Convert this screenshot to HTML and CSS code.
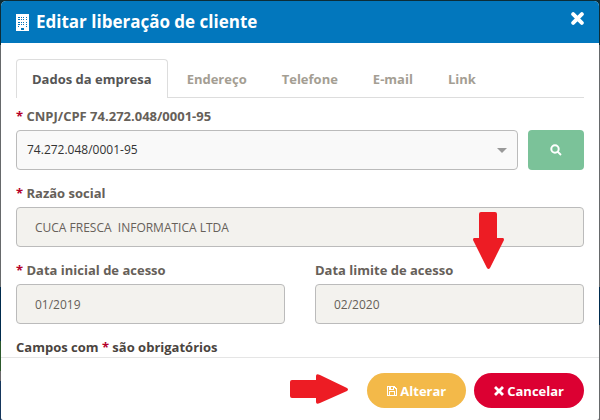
FILE: index.html
```html
<!DOCTYPE html>
<html lang="pt-BR">
<head>
<meta charset="utf-8">
<meta name="viewport" content="width=device-width, initial-scale=1">
<title>Editar liberação de cliente</title>
<link rel="stylesheet" href="styles.css">
</head>
<body>
<main class="modal" role="dialog" aria-labelledby="title">
  <header class="modal-header">
    <svg class="building" viewBox="0 0 13 17" aria-hidden="true" shape-rendering="crispEdges">
      <path fill="#fff" d="M0 0h13v17H0z"/>
      <path fill="#0277bd" d="M2 3h2v1H2zM5 3h1v1H5zM7 3h1v1H7zM10 3h1v1h-1zM2 5h2v1H2zM5 5h1v1H5zM7 5h1v1H7zM10 5h1v1h-1zM2 8h2v1H2zM5 8h1v1H5zM7 8h1v1H7zM10 8h1v1h-1zM2 10h2v1H2zM5 10h1v1H5zM7 10h1v1H7zM10 10h1v1h-1zM2 12h1v1H2zM10 12h1v1h-1zM5 14h3v2H5z"/>
    </svg>
    <h1 class="title" id="title">Editar liberação de cliente</h1>
    <button class="close" type="button" aria-label="Fechar">
      <svg viewBox="0 0 12 12" aria-hidden="true"><path d="M2 2l8 8M10 2l-8 8" stroke="#fff" stroke-width="3.6" stroke-linecap="round"/></svg>
    </button>
  </header>

  <form class="modal-form">
    <div class="modal-body">
      <nav class="tabs">
        <a class="tab active" href="#empresa" aria-current="page">Dados da empresa</a>
        <a class="tab" href="#endereco">Endereço</a>
        <a class="tab" href="#telefone">Telefone</a>
        <a class="tab" href="#email">E-mail</a>
        <a class="tab" href="#link">Link</a>
      </nav>

      <div class="field">
        <label class="label" for="cnpj"><span class="required">*</span> CNPJ/CPF 74.272.048/0001-95</label>
        <div class="search-row">
          <div class="select-wrap">
            <select class="control select" id="cnpj"><option>74.272.048/0001-95</option></select>
            <svg class="caret" viewBox="0 0 10 5" aria-hidden="true"><path d="M0 0h10L5 5z" fill="#999"/></svg>
          </div>
          <button class="search" type="button" aria-label="Pesquisar">
            <svg viewBox="0 0 12 12" aria-hidden="true"><circle cx="5" cy="5" r="3.7" fill="none" stroke="#fff" stroke-width="2"/><path d="M7.5 7.5l3.5 3.5" stroke="#fff" stroke-width="1.8"/></svg>
          </button>
        </div>
      </div>

      <div class="field">
        <label class="label" for="razao"><span class="required">*</span> Razão social</label>
        <input class="control" id="razao" type="text" value="CUCA FRESCA  INFORMATICA LTDA" readonly>
      </div>

      <div class="dates">
        <div class="field">
          <label class="label" for="inicio"><span class="required">*</span> Data inicial de acesso</label>
          <input class="control" id="inicio" type="text" value="01/2019" readonly>
        </div>
        <div class="field">
          <label class="label" for="limite">Data limite de acesso</label>
          <input class="control" id="limite" type="text" value="02/2020" readonly>
          <svg class="arrow-down" viewBox="0 0 31 57" aria-hidden="true"><path fill="#ed1c24" d="M8 0h14q2 0 2 2v24h6q1 0 1 2L17 56q-1.500 2-3 0L0 28q0-2 1-2h5V2q0-2 2-2z"/></svg>
        </div>
      </div>

      <p class="note">Campos com <span class="required">*</span> são obrigatórios</p>
    </div>

    <footer class="modal-footer">
      <svg class="arrow-right" viewBox="0 0 58 30" aria-hidden="true"><path fill="#ed1c24" d="M0 8q0-2 2-2h24V2q0-3 4-1l27 13q2 1.500 0 3L30 29q-4 2-4-1v-4H2q-2 0-2-2z"/></svg>
      <button class="action save" type="button">
        <svg viewBox="0 0 10 10" aria-hidden="true" shape-rendering="crispEdges"><path fill="#fff" fill-rule="evenodd" d="M0 0h8v1h1v1h1v8H0zM1 1v8h1V5h6v4h1V3H8V2H7v2H2V1zM4 1v2h2V1zM3 6v3h4V6z"/></svg>
        Alterar
      </button>
      <button class="action cancel" type="button">
        <svg viewBox="0 0 10 10" aria-hidden="true"><path d="M2 2l6 6M8 2L2 8" stroke="#fff" stroke-width="2.800" stroke-linecap="square"/></svg>
        Cancelar
      </button>
    </footer>
  </form>
</main>
</body>
</html>
```
FILE: styles.css
```css
* { box-sizing: border-box; }

body {
  margin: 0;
  padding: 1px 1px 0;
  height: 100vh;
  display: flex;
  font-family: "Open Sans", "Liberation Sans", sans-serif;
  font-size: 13px;
  line-height: 18px;
  color: #666059;
  background:
    linear-gradient(#66696b 0 0) right 0 top 325px / 50% 100% no-repeat,
    linear-gradient(#0c2d38 45px, #66696b 45px 287px, #002b4d 287px 341px, #2c592c 341px 371px, #6b686b 371px 381px, #15365c 381px);
}

.modal {
  flex: 1;
  min-width: 0;
  display: flex;
  flex-direction: column;
  overflow: hidden;
  border-radius: 5px 5px 2px 2px;
  background: #fff;
}

.modal-header {
  flex: none;
  display: flex;
  align-items: center;
  gap: 7px;
  height: 42px;
  padding: 0 15px;
  background: #0277bd;
  color: #fff;
}

.building { width: 13px; height: 17px; }

.title {
  flex: 1;
  margin: 0;
  font-size: 17px;
  line-height: 24px;
  font-weight: 700;
}

button {
  border: 0;
  font: inherit;
  cursor: pointer;
}

.close {
  align-self: flex-start;
  display: flex;
  margin-top: 11px;
  padding: 0;
  background: none;
}

.close svg { width: 13px; height: 13px; }

.modal-form {
  flex: 1;
  min-height: 0;
  display: flex;
  flex-direction: column;
}

.modal-body {
  flex: 1;
  min-height: 0;
  overflow: hidden;
  padding: 16px 15px 0;
}

.tabs {
  display: flex;
  gap: 3px;
  margin-bottom: 9px;
  border-bottom: 1px solid #ddd;
}

.tab {
  margin-bottom: -1px;
  padding: 10px 15px;
  border: 1px solid transparent;
  border-bottom: 0;
  border-radius: 4px 4px 0 0;
  color: #a49e93;
  font-weight: 700;
  line-height: 18px;
  text-decoration: none;
}

.tab.active {
  border-color: #ddd;
  background: #fff;
  color: #555;
}

.field {
  position: relative;
  margin-bottom: 14px;
}

.label {
  display: block;
  margin-bottom: 5px;
  font-weight: 700;
}

.required { color: #b5002a; }

.control {
  display: block;
  width: 100%;
  height: 40px;
  padding: 0 18px;
  border: 1px solid #bbb;
  border-radius: 4px;
  background: #f3f2ee;
  color: #666059;
  font: inherit;
  font-size: 12px;
}

.search-row { display: flex; gap: 10px; }

.select-wrap {
  position: relative;
  flex: 1;
}

.select {
  appearance: none;
  padding: 0 10px;
  background: #f9f9f9;
  color: #333;
}

.caret {
  position: absolute;
  right: 11px;
  top: 18px;
  width: 10px;
  height: 5px;
}

.search {
  display: flex;
  align-items: center;
  justify-content: center;
  width: 56px;
  border-radius: 4px;
  background: #7bc299;
}

.search svg { width: 12px; height: 12px; }

.dates {
  display: grid;
  grid-template-columns: 1fr 1fr;
  gap: 30px;
}

.arrow-down {
  position: absolute;
  right: 80px;
  top: -49px;
  width: 31px;
  height: 57px;
}

.note {
  margin: 0;
  color: #4a443e;
  font-weight: 700;
}

.modal-footer {
  flex: none;
  display: flex;
  align-items: center;
  justify-content: flex-end;
  gap: 8px;
  padding: 15px 15px 12px;
  border-top: 1px solid #e5e5e5;
}

.arrow-right {
  width: 58px;
  height: 30px;
  margin: 0 11px 4px 0;
}

.action {
  display: flex;
  align-items: center;
  gap: 3px;
  height: 35px;
  padding: 0 20px;
  border-radius: 18px;
  color: #fff;
  font-weight: 700;
}

.action svg { width: 10px; height: 10px; }

.save { background: #f3b949; }

.cancel { background: #dc0032; }
```
